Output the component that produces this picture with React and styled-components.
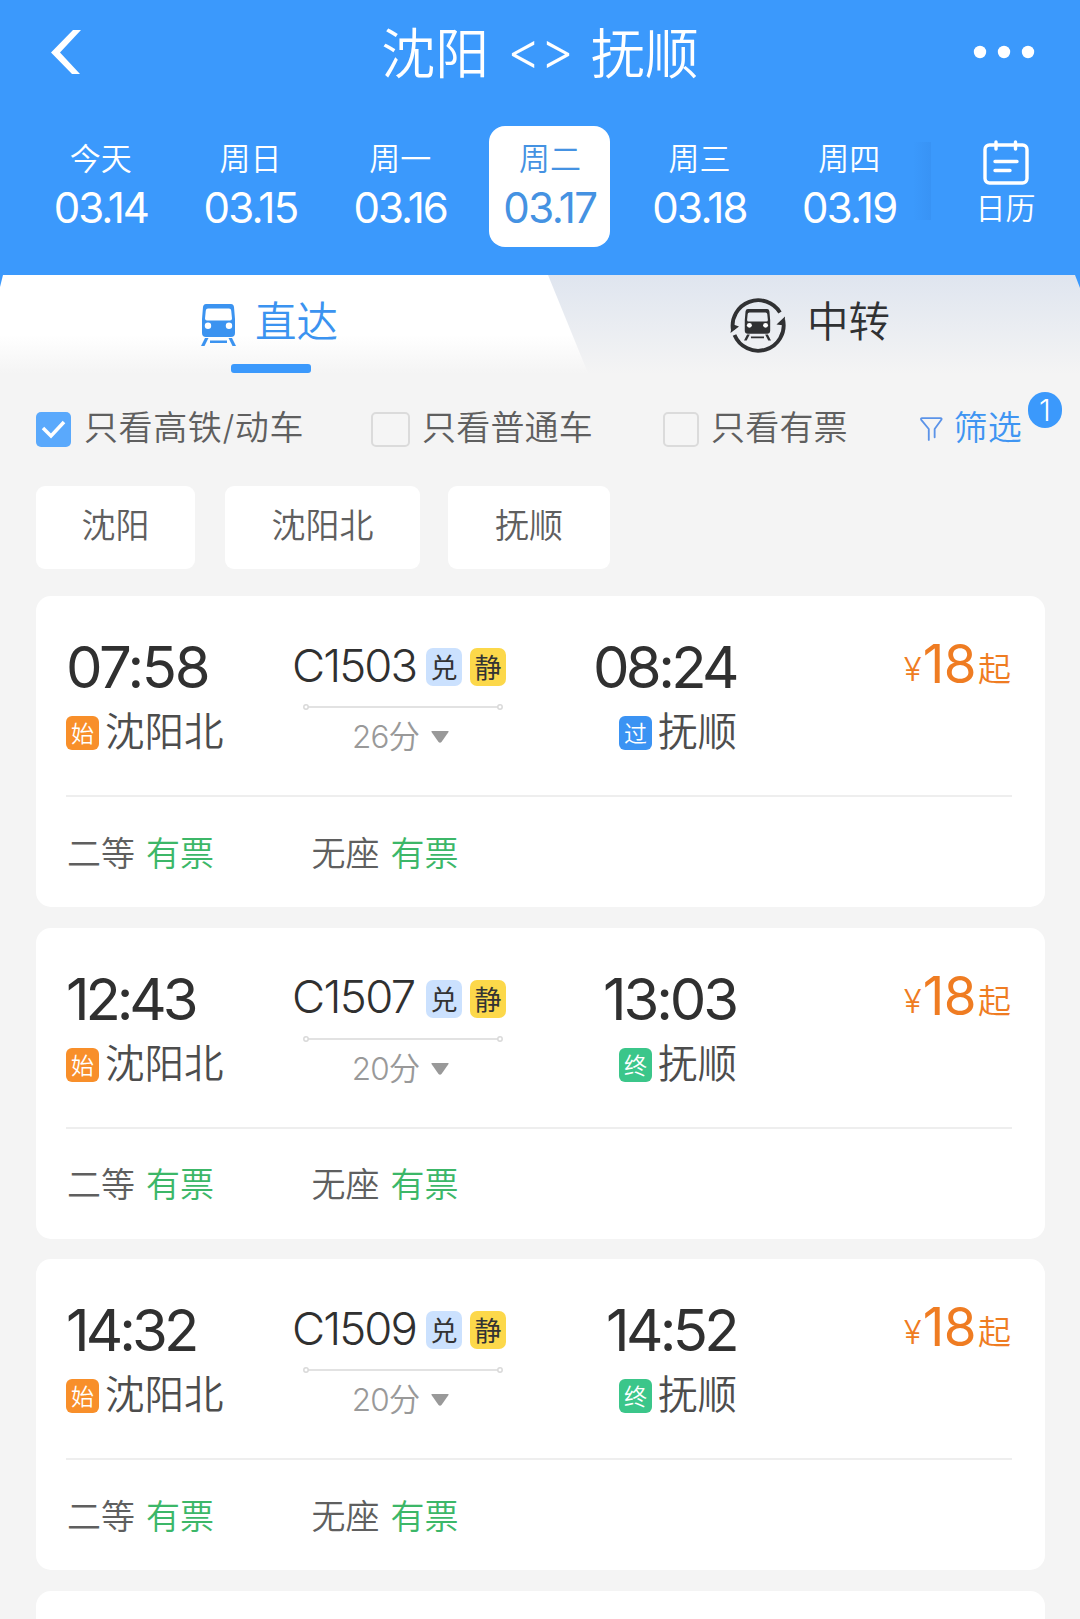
import React from "react";
import styled, { createGlobalStyle } from "styled-components";

const GlobalStyle = createGlobalStyle`
  * {
    box-sizing: border-box;
  }
  body {
    margin: 0;
    background: #f4f4f4;
    font-family: Inter, "Noto Sans CJK SC", sans-serif;
    font-weight: 350;
  }
`;
const Page = styled.div`
  width: 1080px;
  height: 1619px;
  overflow: hidden;
  background: #f4f4f4;
`;

const Header = styled.header`
  height: 275px;
  background: #3b99fc;
  color: white;
`;
const TitleBar = styled.div`
  height: 104px;
  padding: 0 45px 0 51px;
  display: flex;
  align-items: center;
  justify-content: space-between;
`;
const Side = styled.div`
  width: 64px;
  display: flex;
  justify-content: ${(props) => props.$align || "flex-start"};
`;
const Title = styled.h1`
  margin: 0;
  padding: 5px 6px 0 0;
  display: flex;
  font-size: 54px;
  font-weight: 350;
  line-height: 99px;
  white-space: nowrap;
`;
const Arrows = styled.span`
  margin: 0 17px 0 18px;
  font-size: 51px;
  line-height: 92px;
`;
const DateBar = styled.div`
  padding: 22px 0 0 26px;
  display: flex;
`;
const Day = styled.div`
  width: 149.7px;
  flex-shrink: 0;
  display: flex;
  justify-content: center;
`;
const DayBox = styled.div`
  width: 121px;
  height: 121px;
  padding-top: 10px;
  display: flex;
  flex-direction: column;
  align-items: center;
  border-radius: 16px;
  background: ${(props) => (props.$active ? "white" : "transparent")};
  color: ${(props) => (props.$active ? "#4592e2" : "white")};
`;
const Week = styled.div`
  font-size: 31px;
  line-height: 46px;
`;
const DateText = styled.div`
  font-size: 42px;
  font-weight: 400;
  line-height: 52px;
  letter-spacing: ${(props) => props.$track}px;
`;
const Fade = styled.div`
  width: 18px;
  height: 78px;
  margin: 16px 0 0 -11px;
  background: linear-gradient(to right, #3b99fc, #3893f5);
`;
const Calendar = styled.div`
  width: 149px;
  padding-top: 14px;
  display: flex;
  flex-direction: column;
  align-items: center;
`;
const CalendarText = styled.div`
  font-size: 30px;
  line-height: 47px;
`;

const Tabs = styled.div`
  height: 103px;
  display: flex;
  background: linear-gradient(to bottom, #3b99fc 14px, #f4f4f4 14px);
`;
const Tab = styled.div`
  height: 103px;
  width: ${(props) => (props.$active ? "592px" : "532px")};
  margin-left: ${(props) => (props.$active ? "0" : "-44px")};
  padding-left: ${(props) => (props.$active ? "201px" : "181px")};
  color: ${(props) => (props.$active ? "#3b93f0" : "#303133")};
  background: ${(props) =>
    props.$active
      ? "linear-gradient(to bottom, #fff 58%, #f4f4f4 96%)"
      : "linear-gradient(to bottom, #dfe5ef, #f4f4f4 96%)"};
  clip-path: ${(props) =>
    props.$active
      ? "polygon(3px 0, 549px 0, 592px 100%, 0 100%, 0 12px)"
      : "polygon(0 0, 527px 0, 100% 13px, 100% 100%, 42px 100%)"};
`;
const TabLabel = styled.div`
  height: 89px;
  padding-top: 10px;
  display: flex;
  align-items: center;
  gap: ${(props) => props.$gap}px;
  font-size: 41.5px;
`;
const TabText = styled.span`
  margin-bottom: 5px;
  line-height: 60px;
`;
const Underline = styled.div`
  width: 80px;
  height: 9px;
  margin-left: 30px;
  border-radius: 3px;
  background: #3b99fc;
`;

const Filters = styled.div`
  height: 108px;
  padding: 23px 0 0 36px;
  display: flex;
  align-items: flex-start;
  color: #5f5f5f;
  font-size: 34px;
`;
const FilterItem = styled.div`
  width: ${(props) => props.$width}px;
  height: 56px;
  display: flex;
  align-items: center;
`;
const FilterText = styled.span`
  line-height: 50px;
  margin-bottom: 2px;
  letter-spacing: ${(props) => props.$track || 0.2}px;
  white-space: nowrap;
`;
const CheckBox = styled.div`
  width: ${(props) => props.$size}px;
  height: 35px;
  margin-right: ${(props) => props.$gap}px;
  display: flex;
  align-items: center;
  justify-content: center;
  border-radius: 5px;
  border: ${(props) => (props.$checked ? "none" : "2px solid #dbdbdb")};
  background: ${(props) => (props.$checked ? "#5aa9fc" : "#f5f5f5")};
`;
const FilterButton = styled(FilterItem)`
  position: relative;
  gap: 11px;
  color: #3f95f2;
`;
const Badge = styled.span`
  position: absolute;
  top: -9px;
  right: -40px;
  width: 34px;
  height: 36px;
  border-radius: 17px;
  background: #3b99fc;
  color: white;
  font-size: 30px;
  line-height: 36px;
  text-align: center;
`;

const Chips = styled.div`
  height: 110px;
  padding-left: 36px;
  display: flex;
`;
const Chip = styled.div`
  width: ${(props) => props.$width}px;
  height: 83px;
  margin-right: ${(props) => props.$gap}px;
  border-radius: 9px;
  background: white;
  color: #5f5f5f;
  font-size: 34px;
  line-height: 80px;
  text-align: center;
`;

const List = styled.div`
  padding: 0 35.5px 0 36px;
  display: flex;
  flex-direction: column;
  gap: 20.7px;
`;
const Card = styled.div`
  flex-shrink: 0;
  height: 311px;
  padding: 0 32.5px 0 30px;
  border-radius: 15px;
  background: white;
`;
const Trip = styled.div`
  height: 201px;
  padding-top: 41px;
  display: grid;
  grid-template-columns: 220px 228px 222px 1fr;
  border-bottom: 2px solid #eeeeee;
`;
const Stop = styled.div`
  display: flex;
  flex-direction: column;
  align-items: ${(props) => (props.$end ? "flex-end" : "flex-start")};
`;
const Time = styled.div`
  color: #303030;
  font-size: 58px;
  font-weight: 400;
  line-height: 60px;
  letter-spacing: ${(props) => props.$track}px;
`;
const Station = styled.div`
  height: 34px;
  margin: 19px -1px 0 0;
  display: flex;
  align-items: center;
  gap: 6px;
  color: #4d4d4d;
  font-size: 39.5px;
`;
const StationName = styled.span`
  line-height: 50px;
  margin-bottom: 2px;
`;
const StopTag = styled.span`
  width: 33px;
  height: 34px;
  border-radius: 6px;
  background: ${(props) => props.$color};
  color: white;
  font-size: 23px;
  line-height: 36px;
  text-align: center;
`;
const Middle = styled.div`
  display: flex;
  flex-direction: column;
  align-items: center;
`;
const Train = styled.div`
  height: 60px;
  display: flex;
  align-items: center;
`;
const Code = styled.span`
  width: 127px;
  margin: 0 7px 3px -2px;
  color: #303030;
  font-size: 45.5px;
  line-height: 52px;
  letter-spacing: ${(props) => props.$track}px;
`;
const TrainTag = styled.span`
  width: 36px;
  height: 38px;
  margin-left: ${(props) => props.$gap || 0}px;
  border-radius: 7px;
  background: ${(props) => props.$color};
  color: #333;
  font-size: 27px;
  font-weight: 400;
  line-height: 41px;
  text-align: center;
`;
const Track = styled.svg`
  margin: 6px 0 0 6px;
`;
const Duration = styled.div`
  margin: 4px 0 0 2px;
  display: flex;
  align-items: center;
  gap: 11px;
  color: #999;
  font-size: 31.5px;
  line-height: 44px;
  letter-spacing: -1px;
`;
const Price = styled.div`
  margin-right: 1px;
  display: flex;
  align-items: flex-start;
  justify-content: flex-end;
  color: #ef7c22;
  line-height: 54px;
`;
const Unit = styled.span`
  margin-top: 5px;
  font-size: 33px;
`;
const Amount = styled.span`
  margin: 0 2px 0 1px;
  font-size: 53px;
  font-weight: 400;
  letter-spacing: -0.5px;
`;
const Seats = styled.div`
  height: 108px;
  padding-left: 1px;
  display: flex;
  align-items: center;
  color: #5f5f5f;
  font-size: 34px;
`;
const Seat = styled.div`
  width: 244.5px;
  display: flex;
  gap: 11px;
`;
const Left = styled.span`
  color: #3cb768;
`;

const TrainShape = () => (
  <>
    <path
      fillRule="evenodd"
      d="M5 0h25q2.500 0 3 3l1 12v14q0 4-4 4H5q-4 0-4-4V15L2 3q.5-3 3-3zM7 4.500q-2 0-2.200 2L4 14.500q0 2 2 2h23q2 0 2-2l-.8-8q-.2-2-2.200-2z"
    />
    <circle cx="7" cy="21.700" r="3.200" fill="#fff" />
    <circle cx="28" cy="21.700" r="3.200" fill="#fff" />
    <path d="M4 34h3.500L3.500 42H0zM27.500 34H31l4 8h-3.500zM9 36.500h17v2.500H9z" />
  </>
);

const TransferIcon = () => (
  <svg width="58" height="58" viewBox="0 0 58 58" fill="none">
    <path d="M3.900 34A25.600 25.600 0 0 1 51 16.500" stroke="#303133" strokeWidth="3.800" />
    <path d="M54.200 24A25.600 25.600 0 0 1 5.500 39" stroke="#303133" strokeWidth="3.800" />
    <path d="M1.500 37l1.500-9 7 2.500zM56 20.500l-.5 9-8-1z" fill="#303133" />
    <g transform="translate(15 13) scale(0.77 0.75)" fill="#303133">
      <TrainShape />
    </g>
  </svg>
);

const CalendarIcon = () => (
  <svg width="46" height="45" viewBox="0 0 46 45" fill="none" stroke="#fff" strokeWidth="3.400" strokeLinecap="round">
    <rect x="2" y="5" width="42" height="38" rx="4.500" />
    <path d="M13 2v7M32.500 2v7M12 21.500h22M12 30.500h15" />
  </svg>
);

const days = [
  { week: "今天", date: "03.14", track: -2 },
  { week: "周日", date: "03.15", track: -1.7 },
  { week: "周一", date: "03.16", track: -1.9 },
  { week: "周二", date: "03.17", track: -1.5, active: true },
  { week: "周三", date: "03.18", track: -1.7 },
  { week: "周四", date: "03.19", track: -1.7 },
];

const trips = [
  { code: "C1503", codeTrack: -1.9, start: "07:58", startTrack: -2.4, end: "08:24", endTrack: -3.6, tag: "过", color: "#3b93f3", time: "26分" },
  { code: "C1507", codeTrack: -1.6, start: "12:43", startTrack: -4.1, end: "13:03", endTrack: -3.1, tag: "终", color: "#3bc68a", time: "20分" },
  { code: "C1509", codeTrack: -1.9, start: "14:32", startTrack: -3.9, end: "14:52", endTrack: -3.7, tag: "终", color: "#3bc68a", time: "20分" },
];

const TripCard = ({ trip }) => (
  <Card>
    <Trip>
      <Stop>
        <Time $track={trip.startTrack}>{trip.start}</Time>
        <Station>
          <StopTag $color="#f88f2a">始</StopTag>
          <StationName>沈阳北</StationName>
        </Station>
      </Stop>
      <Middle>
        <Train>
          <Code $track={trip.codeTrack}>{trip.code}</Code>
          <TrainTag $color="#cbe1fe">兑</TrainTag>
          <TrainTag $color="#fcd84a" $gap={8}>
            静
          </TrainTag>
        </Train>
        <Track width="202" height="8" viewBox="0 0 202 8" fill="none" stroke="#d9d9d9" strokeWidth="1.500">
          <circle cx="4" cy="4" r="2.200" />
          <path d="M6 4h190" />
          <circle cx="198" cy="4" r="2.200" />
        </Track>
        <Duration>
          {trip.time}
          <svg width="20" height="14" viewBox="0 0 20 14">
            <path d="M2 1h16q1 0 .5 1l-7 10q-1.500 1.500-3 0l-7-10Q1 1 2 1z" fill="#999" />
          </svg>
        </Duration>
      </Middle>
      <Stop $end>
        <Time $track={trip.endTrack}>{trip.end}</Time>
        <Station>
          <StopTag $color={trip.color}>{trip.tag}</StopTag>
          <StationName>抚顺</StationName>
        </Station>
      </Stop>
      <Price>
        <Unit>¥</Unit>
        <Amount>18</Amount>
        <Unit>起</Unit>
      </Price>
    </Trip>
    <Seats>
      <Seat>
        二等 <Left>有票</Left>
      </Seat>
      <Seat>
        无座 <Left>有票</Left>
      </Seat>
    </Seats>
  </Card>
);

const App = () => {
  return (
    <Page>
      <GlobalStyle />
      <Header>
        <TitleBar>
          <Side>
            <svg width="31" height="44" viewBox="0 0 31 44">
              <path d="M22 0h8L9 22.500 29 44h-8L0 22.500z" fill="#fff" />
            </svg>
          </Side>
          <Title>
            沈阳<Arrows>&lt;&gt;</Arrows>抚顺
          </Title>
          <Side $align="flex-end">
            <svg width="62" height="14" viewBox="0 0 62 14" fill="#fff">
              <circle cx="7" cy="7" r="6.200" />
              <circle cx="31" cy="7" r="6.200" />
              <circle cx="55" cy="7" r="6.200" />
            </svg>
          </Side>
        </TitleBar>
        <DateBar>
          {days.map((day) => (
            <Day key={day.date}>
              <DayBox $active={day.active}>
                <Week>{day.week}</Week>
                <DateText $track={day.track}>{day.date}</DateText>
              </DayBox>
            </Day>
          ))}
          <Fade />
          <Calendar>
            <CalendarIcon />
            <CalendarText>日历</CalendarText>
          </Calendar>
        </DateBar>
      </Header>
      <Tabs>
        <Tab $active>
          <TabLabel $gap={19}>
            <svg width="35" height="42" viewBox="0 0 35 42" fill="#3b93f0">
              <TrainShape />
            </svg>
            <TabText>直达</TabText>
          </TabLabel>
          <Underline />
        </Tab>
        <Tab>
          <TabLabel $gap={20}>
            <TransferIcon />
            <TabText>中转</TabText>
          </TabLabel>
        </Tab>
      </Tabs>
      <Filters>
        <FilterItem $width={335}>
          <CheckBox $checked $size={35} $gap={13}>
            <svg width="25" height="20" viewBox="0 0 25 20" fill="none">
              <path d="M2 9l8 8L23 3" stroke="#fff" strokeWidth="3.500" />
            </svg>
          </CheckBox>
          <FilterText $track={0.6}>只看高铁/动车</FilterText>
        </FilterItem>
        <FilterItem $width={292}>
          <CheckBox $size={39} $gap={12} />
          <FilterText>只看普通车</FilterText>
        </FilterItem>
        <FilterItem $width={257}>
          <CheckBox $size={36} $gap={12} />
          <FilterText>只看有票</FilterText>
        </FilterItem>
        <FilterButton $width={102}>
          <svg width="27" height="30" viewBox="0 0 27 30" fill="none" stroke="#5b93e8" strokeWidth="2.200" strokeLinecap="round" strokeLinejoin="round">
            <path d="M10.500 28V15L1.500 4q-1-2 1-2h22q2 0 1 2l-8 11v10" />
          </svg>
          <FilterText>筛选</FilterText>
          <Badge>1</Badge>
        </FilterButton>
      </Filters>
      <Chips>
        <Chip $width={159} $gap={30}>
          沈阳
        </Chip>
        <Chip $width={195} $gap={28}>
          沈阳北
        </Chip>
        <Chip $width={162}>抚顺</Chip>
      </Chips>
      <List>
        {trips.map((trip) => (
          <TripCard key={trip.code} trip={trip} />
        ))}
        <Card />
      </List>
    </Page>
  );
};

export default App;
